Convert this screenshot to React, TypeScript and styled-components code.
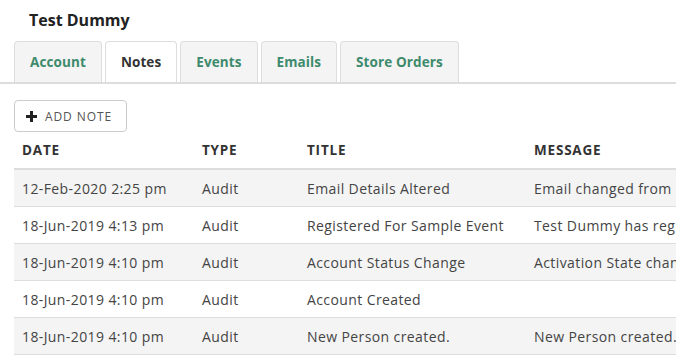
import React from "react";
import styled, { createGlobalStyle } from "styled-components";

const GlobalStyle = createGlobalStyle`
  html, body {
    margin: 0;
    padding: 0;
    background: #fff;
    overflow: hidden;
  }
  body {
    font-family: "Open Sans", "Noto Sans", sans-serif;
    color: #333;
  }
`;

const Page = styled.div`
  width: 676px;
  height: 356px;
  overflow: hidden;
`;

const Title = styled.h1`
  margin: 0;
  padding: 10px 29px 0;
  height: 31px;
  font-size: 16px;
  line-height: 20px;
  font-weight: 700;
  color: #222;
`;

const TabBar = styled.div`
  display: flex;
  gap: 3px;
  padding-left: 14px;
  border-bottom: 2px solid #ddd;
`;

const Tab = styled.div<{ $active?: boolean }>`
  height: 41px;
  padding: 0 15px;
  display: flex;
  align-items: center;
  justify-content: center;
  box-sizing: border-box;
  border: 1px solid #ddd;
  border-bottom: none;
  border-radius: 4px 4px 0 0;
  background: ${(p) => (p.$active ? "#fff" : "#f4f4f4")};
  color: ${(p) => (p.$active ? "#333" : "#3d8a6c")};
  font-size: 13.5px;
  font-weight: 700;
  letter-spacing: 0.1px;
`;

const Toolbar = styled.div`
  padding: 16px 14px 0;
`;

const AddButton = styled.button`
  display: inline-flex;
  align-items: center;
  gap: 8px;
  height: 32px;
  padding: 0 14px 0 11px;
  box-sizing: border-box;
  background: #fff;
  border: 1px solid #ccc;
  border-radius: 4px;
  font-family: inherit;
  font-size: 12px;
  letter-spacing: 0.9px;
  color: #555;
  text-transform: uppercase;
`;

const Table = styled.table`
  margin-left: 14px;
  width: 760px;
  border-collapse: collapse;
  table-layout: fixed;
  font-size: 14px;
  letter-spacing: 0.4px;
`;

const Th = styled.th<{ $w: number }>`
  box-sizing: border-box;
  width: ${(p) => p.$w}px;
  height: 37px;
  padding: 0 8px;
  text-align: left;
  font-size: 13.5px;
  font-weight: 700;
  letter-spacing: 0.8px;
  color: #333;
  text-transform: uppercase;
  border-bottom: 2px solid #ddd;
  white-space: nowrap;
`;

const Row = styled.tr<{ $striped: boolean }>`
  background: ${(p) => (p.$striped ? "#f4f4f4" : "#fff")};
  border-bottom: 1px solid #ddd;
`;

const Td = styled.td`
  height: 36px;
  padding: 0 8px;
  color: #444;
  white-space: nowrap;
  overflow: hidden;
`;

const Plus = () => (
  <svg width="11" height="11" viewBox="0 0 11 11">
    <path d="M5.5 0v11M0 5.5h11" stroke="#222" strokeWidth="3" />
  </svg>
);

const tabs = [
  { label: "Account" },
  { label: "Notes", active: true },
  { label: "Events" },
  { label: "Emails" },
  { label: "Store Orders" },
];

const notes = [
  ["12-Feb-2020 2:25 pm", "Audit", "Email Details Altered", "Email changed from '' to 'test@example.com'"],
  ["18-Jun-2019 4:13 pm", "Audit", "Registered For Sample Event", "Test Dummy has registered for Sample Event"],
  ["18-Jun-2019 4:10 pm", "Audit", "Account Status Change", "Activation State changed"],
  ["18-Jun-2019 4:10 pm", "Audit", "Account Created", ""],
  ["18-Jun-2019 4:10 pm", "Audit", "New Person created.", "New Person created."],
];

export default function App() {
  return (
    <Page>
      <GlobalStyle />
      <Title>Test Dummy</Title>
      <TabBar>
        {tabs.map((t) => (
          <Tab key={t.label} $active={t.active}>
            {t.label}
          </Tab>
        ))}
      </TabBar>
      <Toolbar>
        <AddButton>
          <Plus />
          Add Note
        </AddButton>
      </Toolbar>
      <Table>
        <thead>
          <tr>
            <Th $w={180}>Date</Th>
            <Th $w={105}>Type</Th>
            <Th $w={227}>Title</Th>
            <Th $w={248}>Message</Th>
          </tr>
        </thead>
        <tbody>
          {notes.map((n, i) => (
            <Row key={i} $striped={i % 2 === 0}>
              {n.map((c, j) => (
                <Td key={j}>{c}</Td>
              ))}
            </Row>
          ))}
        </tbody>
      </Table>
    </Page>
  );
}
